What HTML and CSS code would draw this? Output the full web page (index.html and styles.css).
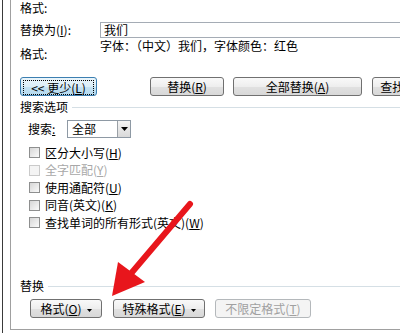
FILE: index.html
```html
<!DOCTYPE html>
<html lang="zh-CN">
<head>
<meta charset="utf-8">
<title>替换</title>
<link rel="stylesheet" href="styles.css">
</head>
<body>
<div class="page">
  <div class="edge"></div>
  <div class="dialog">
    <div class="r1">格式:</div>
    <div class="r2">
      <span class="w80">替换为(<u>I</u>):</span>
      <div class="input">我们</div>
    </div>
    <div class="r3">
      <span class="w80 fmt">格式:</span>
      <span class="desc">字体：（中文）我们，字体颜色：红色</span>
    </div>
    <div class="btnrow">
      <div class="btn focus b1"><span class="focusrect">&lt;&lt; 更少(<u>L</u>)</span></div>
      <div class="btn b2">替换(<u>R</u>)</div>
      <div class="btn b3">全部替换(<u>A</u>)</div>
      <div class="btn b4">查找下一处(<u>F</u>)</div>
    </div>
    <div class="group"><span>搜索选项</span><span class="rule"></span></div>
    <div class="search">
      <span class="slbl">搜索<u>:</u></span>
      <div class="select">
        <span class="sval">全部</span>
        <span class="sbtn"><svg width="7" height="4" viewBox="0 0 7 4"><path d="M0 0h7L3.5 4z" fill="#000"/></svg></span>
      </div>
    </div>
    <div class="checks">
      <div class="chk"><span class="box"></span>区分大小写(<u>H</u>)</div>
      <div class="chk dis"><span class="box"></span>全字匹配(<u>Y</u>)</div>
      <div class="chk"><span class="box"></span>使用通配符(<u>U</u>)</div>
      <div class="chk"><span class="box"></span>同音(英文)(<u>K</u>)</div>
      <div class="chk"><span class="box"></span>查找单词的所有形式(英文)(<u>W</u>)</div>
    </div>
    <div class="group g2"><span>替换</span><span class="rule"></span></div>
    <div class="btnrow2">
      <div class="btn c1">格式(<u>O</u>)<svg class="tri" width="5" height="3" viewBox="0 0 5 3"><path d="M0 0h5L2.5 3z" fill="#000"/></svg></div>
      <div class="btn c2">特殊格式(<u>E</u>)<svg class="tri" width="5" height="3" viewBox="0 0 5 3"><path d="M0 0h5L2.5 3z" fill="#000"/></svg></div>
      <div class="btn disabled c3">不限定格式(<u>T</u>)</div>
    </div>
  </div>
  <svg class="arrow" width="400" height="333" viewBox="0 0 400 333">
    <line x1="190" y1="204" x2="128" y2="277" stroke="#e8161c" stroke-width="6" stroke-linecap="round"/>
    <polygon points="112,296 118,262 145,282" fill="#e8161c"/>
  </svg>
</div>
</body>
</html>
```
FILE: styles.css
```css
body {
  margin: 0;
  background: #fff;
  color: #000;
  font: 12px/14px "Noto Sans CJK SC", "Noto Sans", sans-serif;
}
u { text-decoration: underline; }
.page {
  position: relative;
  display: flex;
  width: 400px;
  height: 333px;
  overflow: hidden;
}
.edge {
  flex: none;
  width: 2px;
  border-right: 1px solid #3a3a3a;
  margin-right: 7px;
}
.dialog {
  flex: none;
  width: 400px;
  height: 329px;
  border-left: 1px solid #a0a0a0;
  border-bottom: 1px solid #a0a0a0;
  padding-left: 9px;
  overflow: hidden;
}
.r1 { height: 15px; line-height: 15px; }
.r2 { display: flex; margin-top: 7px; height: 16px; line-height: 16px; }
.w80 { flex: none; width: 80px; }
.input {
  flex: none;
  width: 320px;
  height: 14px;
  line-height: 14px;
  padding-left: 3px;
  border: 1px solid #a5acb5;
}
.r3 { display: flex; margin-top: 1px; }
.fmt { padding-top: 8px; }
.btnrow { display: flex; margin-top: 16px; height: 19px; }
.btn {
  flex: none;
  box-sizing: border-box;
  height: 19px;
  border: 1px solid #707070;
  border-radius: 3px;
  background: linear-gradient(#f9f9f9, #eeeeee 50%, #e1e1e1 51%, #d8d8d8);
  text-align: center;
  line-height: 17px;
  white-space: nowrap;
}
.btn.focus {
  border-color: #3c7fb1;
  background: linear-gradient(#eaf5fb, #dbeef8 50%, #c6e3f3 51%, #b4d9ee);
  padding: 2px;
}
.focusrect {
  display: block;
  height: 13px;
  line-height: 13px;
  border: 1px dotted #000;
}
.b1 { width: 77px; }
.b2 { width: 74px; margin-left: 53px; }
.b3 { width: 129px; margin-left: 9px; }
.b4 { width: 91px; margin-left: 10px; }
.group { display: flex; align-items: center; margin-top: 4px; height: 14px; }
.rule { flex: 1; height: 1px; background: #d5dfe5; margin-left: 4px; }
.search { display: flex; align-items: center; margin-top: 6px; height: 18px; padding-left: 8px; }
.slbl { width: 39px; flex: none; }
.select {
  flex: none;
  display: flex;
  box-sizing: border-box;
  width: 64px;
  height: 18px;
  border: 1px solid #8e99a4;
}
.sval { flex: 1; padding-left: 4px; line-height: 16px; }
.sbtn {
  flex: none;
  box-sizing: border-box;
  width: 13px;
  height: 16px;
  border-left: 1px solid #9aa0a6;
  background: linear-gradient(#f4f4f4, #d9d9d9);
  display: flex;
  align-items: center;
  justify-content: center;
}
.checks { margin-top: 6px; padding-left: 9px; }
.chk { display: flex; align-items: center; height: 17px; }
.chk:nth-child(even) { height: 18px; }
.box {
  flex: none;
  box-sizing: border-box;
  width: 11px;
  height: 11px;
  margin-right: 5px;
  border: 1px solid #8e8f8f;
  background: linear-gradient(135deg, #d6d6d6, #fafafa);
}
.chk.dis { color: #a8a8a8; }
.chk.dis .box { border-color: #cacaca; background: #f4f4f4; }
.g2 { margin-top: 48px; }
.btnrow2 { display: flex; margin-top: 6px; padding-left: 10px; }
.c1 { width: 72px; }
.c2 { width: 92px; margin-left: 11px; }
.c3 { width: 96px; margin-left: 10px; }
.tri { margin-left: 5px; vertical-align: middle; }
.btn.disabled {
  border-color: #b4b8bb;
  background: #f4f4f4;
  color: #a0a0a0;
}
.arrow { position: absolute; left: 0; top: 0; pointer-events: none; }
```
